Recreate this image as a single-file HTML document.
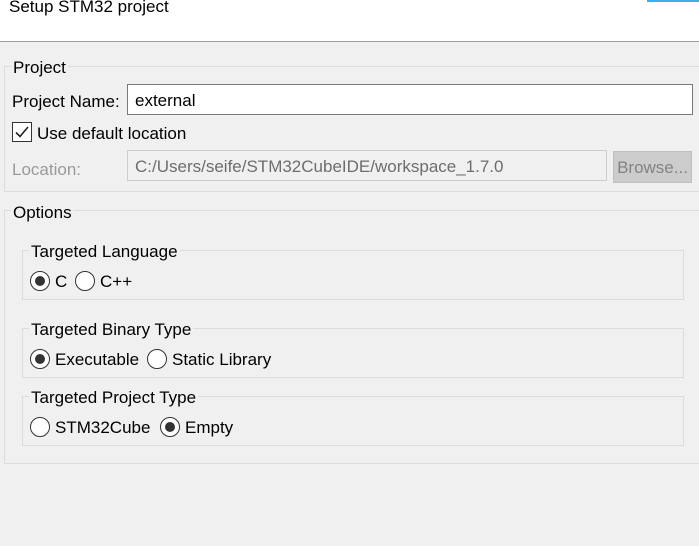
<!DOCTYPE html>
<html><head><style>
*{margin:0;padding:0;box-sizing:border-box}
body{width:699px;height:546px;overflow:hidden;background:#f0f0f0;font-family:"Liberation Sans",sans-serif;font-size:17px;color:#000;position:relative}
.a{position:absolute;white-space:nowrap}
.box{position:absolute;border:1px solid #dcdcdc}
.leg{position:absolute;background:#f0f0f0;padding:0 2px;line-height:20px}
.radio{position:absolute;width:20px;height:20px;border:1px solid #333;border-radius:50%;background:#fff}
.radio.on::after{content:"";position:absolute;left:4px;top:4px;width:10px;height:10px;border-radius:50%;background:#333}
</style></head><body>
<div class="a" style="left:0;top:0;width:699px;height:42px;background:#fff;border-bottom:1px solid #a0a0a0"></div>
<div class="a" style="left:647px;top:0;width:52px;height:2px;background:#3daee9"></div>
<div class="a" style="left:9px;top:-3px;font-size:17px">Setup STM32 project</div>

<div class="box" style="left:4px;top:66px;width:700px;height:126px"></div>
<div class="leg" style="left:11px;top:58px">Project</div>
<div class="a" style="left:12px;top:92px">Project Name:</div>
<div class="a" style="left:127px;top:84px;width:566px;height:31px;background:#fff;border:1px solid #7a7a7a;padding:6px 7px">external</div>
<div class="a" style="left:12px;top:122px;width:20px;height:20px;border:1px solid #333;background:#fff">
<svg width="18" height="18" viewBox="0 0 18 18" style="position:absolute;left:0;top:0"><path d="M3 9.5 L7 13.5 L15 4" fill="none" stroke="#222" stroke-width="1.6"/></svg></div>
<div class="a" style="left:37px;top:124px">Use default location</div>
<div class="a" style="left:12px;top:160px;color:#9a9a9a">Location:</div>
<div class="a" style="left:127px;top:150px;width:480px;height:31px;background:#f0f0f0;border:1px solid #ccc;padding:6px 7px;color:#6d6d6d">C:/Users/seife/STM32CubeIDE/workspace_1.7.0</div>
<div class="a" style="left:613px;top:151px;width:79px;height:32px;background:#cccccc;border:1px solid #bfbfbf;color:#838383;text-align:center;line-height:32px">Browse...</div>

<div class="box" style="left:4px;top:210px;width:700px;height:254px"></div>
<div class="leg" style="left:11px;top:203px">Options</div>

<div class="box" style="left:22px;top:250px;width:662px;height:50px"></div>
<div class="leg" style="left:29px;top:242px">Targeted Language</div>
<div class="radio on" style="left:30px;top:271px"></div><div class="a" style="left:55px;top:272px">C</div>
<div class="radio" style="left:75px;top:271px"></div><div class="a" style="left:100px;top:272px">C++</div>

<div class="box" style="left:22px;top:328px;width:662px;height:50px"></div>
<div class="leg" style="left:29px;top:320px">Targeted Binary Type</div>
<div class="radio on" style="left:30px;top:349px"></div><div class="a" style="left:55px;top:350px">Executable</div>
<div class="radio" style="left:147px;top:349px"></div><div class="a" style="left:172px;top:350px">Static Library</div>

<div class="box" style="left:22px;top:396px;width:662px;height:50px"></div>
<div class="leg" style="left:29px;top:388px">Targeted Project Type</div>
<div class="radio" style="left:30px;top:417px"></div><div class="a" style="left:55px;top:418px">STM32Cube</div>
<div class="radio on" style="left:160px;top:417px"></div><div class="a" style="left:185px;top:418px">Empty</div>
</body></html>
